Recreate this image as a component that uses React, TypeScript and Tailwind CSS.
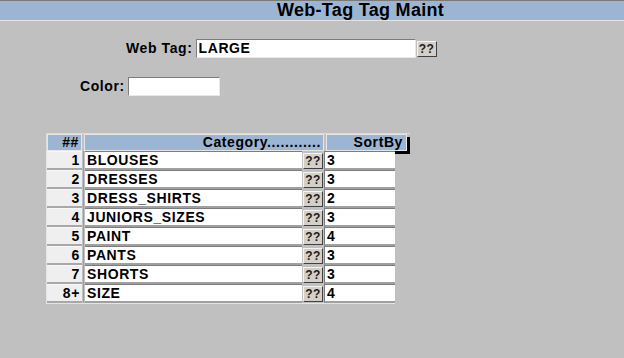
import React from 'react';

const rows = [
  { n: '1', cat: 'BLOUSES', sort: '3' },
  { n: '2', cat: 'DRESSES', sort: '3' },
  { n: '3', cat: 'DRESS_SHIRTS', sort: '2' },
  { n: '4', cat: 'JUNIORS_SIZES', sort: '3' },
  { n: '5', cat: 'PAINT', sort: '4' },
  { n: '6', cat: 'PANTS', sort: '3' },
  { n: '7', cat: 'SHORTS', sort: '3' },
  { n: '8+', cat: 'SIZE', sort: '4' },
];

function LookupButton() {
  return (
    <button className="flex h-[16px] w-[20px] items-center justify-center border border-t-[#f4f4f4] border-l-[#f4f4f4] border-r-[#404040] border-b-[#404040] bg-[#d4d0c8] text-[12px] font-bold leading-none tracking-[0.5px] text-[#1a1a1a]">
      ??
    </button>
  );
}

export default function App() {
  return (
    <div className="h-[358px] w-[624px] overflow-hidden bg-[#c0c0c0] font-['Liberation_Sans',Arial,sans-serif] text-[14px] font-bold tracking-[0.6px] text-black">
      <div className="h-[21px] border-t border-b border-t-[#7a7a7a] border-b-[#e4e4e4] bg-[#9bb5d3] pl-[277px] text-[18px] leading-[19px] tracking-[0.3px]">
        Web-Tag Tag Maint
      </div>

      <div className="mt-[17px] flex items-center pl-[126px]">
        <span className="mr-[3px]">Web Tag:</span>
        <div className="flex h-[19px] w-[220px] items-center border border-t-[#7c7c7c] border-l-[#7c7c7c] border-r-[#e8e8e8] border-b-[#e8e8e8] bg-white pl-[2px]">
          LARGE
        </div>
        <div className="ml-[1px]">
          <LookupButton />
        </div>
      </div>

      <div className="mt-[17px] flex items-center pl-[80px]">
        <span className="mr-[3px]">Color:</span>
        <div className="h-[19px] w-[92px] border border-t-[#7c7c7c] border-l-[#7c7c7c] border-r-[#e8e8e8] border-b-[#e8e8e8] bg-white" />
      </div>

      <div className="ml-[46px] mt-[36px] w-[364px]">
        <div className="flex h-[18px] gap-[2px] border-l border-t border-[#dcdcdc]">
          <div className="flex w-[35px] items-center justify-end border border-[#e6e6e6] bg-[#9bb5d3] pr-[2px]">
            ##
          </div>
          <div className="flex w-[240px] items-center justify-end border border-[#e6e6e6] bg-[#9bb5d3] pr-[2px]">
            Category............
          </div>
          <div className="flex w-[81px] items-center justify-end border border-[#e6e6e6] bg-[#9bb5d3] pr-[3px] shadow-[3px_3px_0_0_#000]">
            SortBy
          </div>
        </div>
        <div className="w-[349px] border-l border-b border-[#e4e4e4]">
          {rows.map((r) => (
            <div key={r.n} className="flex h-[19px] items-stretch gap-[1px]">
              <div className="flex w-[35px] items-center justify-end border-b-2 border-t border-b-[#a8a8a8] border-t-[#f8f8f8] bg-[#efefef] pr-[2px]">
                {r.n}
              </div>
              <div className="w-[1px] bg-[#9c9c9c]" />
              <div className="flex w-[217px] items-center border-b-2 border-t border-b-[#a0a0a0] border-t-[#7c7c7c] bg-white pl-[2px]">
                {r.cat}
              </div>
              <div className="flex items-center">
                <LookupButton />
              </div>
              <div className="flex w-[71px] items-center border-b-2 border-l border-t border-b-[#a0a0a0] border-l-[#7c7c7c] border-t-[#7c7c7c] bg-white pl-[2px]">
                {r.sort}
              </div>
            </div>
          ))}
        </div>
      </div>
    </div>
  );
}
